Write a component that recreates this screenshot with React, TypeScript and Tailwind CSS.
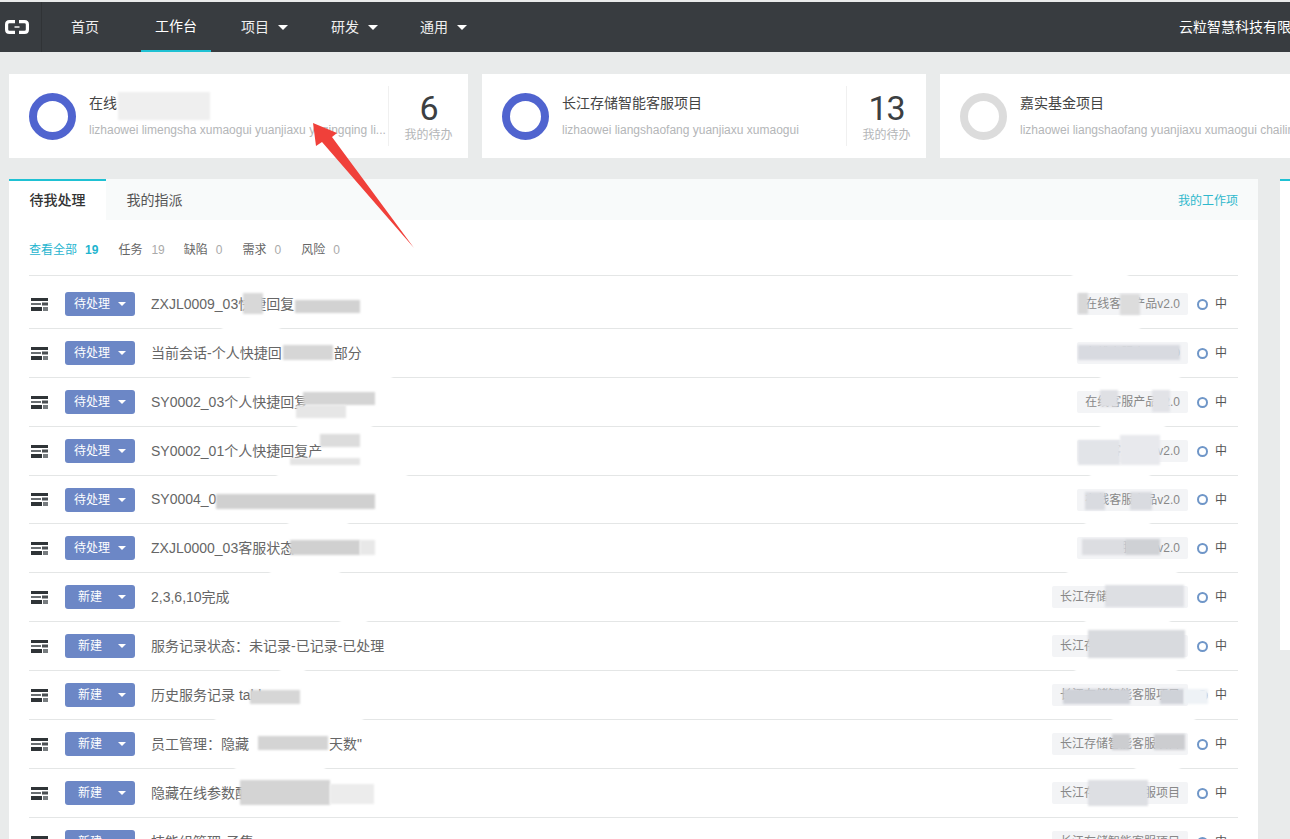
const font = "font-['Liberation_Sans','Noto_Sans_CJK_SC',sans-serif]";

const rows = [
  { status: "待处理", title: "ZXJL0009_03快捷回复", tag: "在线客服产品v2.0" },
  { status: "待处理", title: "当前会话-个人快捷回", tail: "部分", tailClass: "ml-[52px]", tag: "在线客服产品v2.0" },
  { status: "待处理", title: "SY0002_03个人快捷回复", tag: "在线客服产品v2.0" },
  { status: "待处理", title: "SY0002_01个人快捷回复产", tag: "在线客服产品v2.0" },
  { status: "待处理", title: "SY0004_0", tag: "在线客服产品v2.0" },
  { status: "待处理", title: "ZXJL0000_03客服状态", tag: "在线客服产品v2.0" },
  { status: "新建", title: "2,3,6,10完成", tag: "长江存储智能客服项目" },
  { status: "新建", title: "服务记录状态：未记录-已记录-已处理", tag: "长江存储智能客服项目" },
  { status: "新建", title: "历史服务记录 table", tag: "长江存储智能客服项目" },
  { status: "新建", title: "员工管理：隐藏", tail: "天数\"", tailClass: "ml-[80px]", tag: "长江存储智能客服项目" },
  { status: "新建", title: "隐藏在线参数配置", tag: "长江存储智能客服项目" },
  { status: "新建", title: "技能组管理-子集", tag: "长江存储智能客服项目" },
];

const cards = [
  { title: "在线", people: "lizhaowei limengsha xumaogui yuanjiaxu yuqingqing li...", count: "6", ring: "border-[#5064cf]", width: "w-[459px]" },
  { title: "长江存储智能客服项目", people: "lizhaowei liangshaofang yuanjiaxu xumaogui", count: "13", ring: "border-[#5064cf]", width: "w-[444px]" },
  { title: "嘉实基金项目", people: "lizhaowei liangshaofang yuanjiaxu xumaogui chailing", count: "", ring: "border-[#dcdcdc]", width: "w-[400px]" },
];

// mosaic patches that hide private text in the screenshot
const smudges = [
  // white patches over the row dividers
  "left-[222px] top-[324px] h-2 w-[58px] bg-white",
  "left-[250px] top-[373px] h-2 w-[142px] bg-white",
  "left-[297px] top-[422px] h-2 w-[75px] bg-white",
  "left-[277px] top-[471px] h-2 w-[130px] bg-white",
  "left-[288px] top-[520px] h-2 w-[60px] bg-white",
  "left-[270px] top-[569px] h-2 w-[70px] bg-white",
  "left-[340px] top-[618px] h-2 w-[27px] bg-white",
  "left-[280px] top-[667px] h-2 w-[25px] bg-white",
  "left-[215px] top-[715px] h-2 w-[148px] bg-white",
  "left-[235px] top-[764px] h-2 w-[90px] bg-white",
  "left-[1072px] top-[271px] h-2 w-[56px] bg-white",
  "left-[1072px] top-[324px] h-2 w-[68px] bg-white",
  "left-[1100px] top-[373px] h-2 w-[80px] bg-white",
  "left-[1100px] top-[422px] h-2 w-[65px] bg-white",
  "left-[1090px] top-[471px] h-2 w-[60px] bg-white",
  "left-[1085px] top-[520px] h-2 w-[65px] bg-white",
  "left-[1067px] top-[569px] h-2 w-[110px] bg-white",
  "left-[1085px] top-[618px] h-2 w-[85px] bg-white",
  "left-[1075px] top-[667px] h-2 w-[102px] bg-white",
  "left-[1112px] top-[715px] h-2 w-[83px] bg-white",
  "left-[1135px] top-[764px] h-2 w-[45px] bg-white",
  // card title
  "left-[118px] top-[92px] h-[28px] w-[92px] bg-[#efefef]",
  // titles
  "left-[243px] top-[293px] h-[21px] w-[20px] bg-[#d8d8d8]",
  "left-[295px] top-[300px] h-[13px] w-[65px] bg-[#d2d2d2]",
  "left-[283px] top-[345px] h-[15px] w-[50px] bg-[#d6d6d6]",
  "left-[303px] top-[392px] h-[13px] w-[72px] bg-[#d4d4d4]",
  "left-[296px] top-[405px] h-[13px] w-[50px] bg-[#e6e6e6]",
  "left-[320px] top-[434px] h-[13px] w-[40px] bg-[#dcdcdc]",
  "left-[290px] top-[458px] h-[7px] w-[70px] bg-[#e4e4e4]",
  "left-[216px] top-[494px] h-[15px] w-[159px] bg-[#d0d0d0]",
  "left-[290px] top-[540px] h-[15px] w-[70px] bg-[#d0d0d0]",
  "left-[360px] top-[540px] h-[15px] w-[15px] bg-[#e8e8e8]",
  "left-[250px] top-[690px] h-[14px] w-[50px] bg-[#d6d6d6]",
  "left-[258px] top-[736px] h-[14px] w-[70px] bg-[#d4d4d4]",
  "left-[240px] top-[780px] h-[25px] w-[90px] bg-[#d4d4d4]",
  "left-[330px] top-[784px] h-[20px] w-[44px] bg-[#ececec]",
  // tags
  "left-[1078px] top-[293px] h-[21px] w-[10px] bg-[#d8d8d8]",
  "left-[1120px] top-[294px] h-[21px] w-[20px] bg-[#dcdcdc]",
  "left-[1078px] top-[345px] h-[15px] w-[102px] bg-[#d8dae0]",
  "left-[1100px] top-[390px] h-[17px] w-[18px] bg-[#dfe0e4]",
  "left-[1152px] top-[390px] h-[22px] w-[18px] bg-[#e2e3e7]",
  "left-[1078px] top-[440px] h-[25px] w-[42px] bg-[#e2e4e8]",
  "left-[1120px] top-[435px] h-[30px] w-[40px] bg-[#e8e9ed]",
  "left-[1085px] top-[492px] h-[18px] w-[20px] bg-[#d9dbe0]",
  "left-[1130px] top-[492px] h-[18px] w-[22px] bg-[#d9dbe0]",
  "left-[1082px] top-[539px] h-4 w-[43px] bg-[#dcdde1]",
  "left-[1125px] top-[539px] h-4 w-[35px] bg-[#cfd1d5]",
  "left-[1105px] top-[585px] h-[22px] w-[79px] bg-[#dddfe3]",
  "left-[1088px] top-[630px] h-7 w-[97px] bg-[#d8dade]",
  "left-[1063px] top-[689px] h-[15px] w-[67px] bg-[#cfd2d8]",
  "left-[1160px] top-[689px] h-[15px] w-[24px] bg-[#cfd2d8]",
  "left-[1184px] top-[689px] h-[15px] w-[24px] bg-[#eef2f6]",
  "left-[1112px] top-[734px] h-4 w-[18px] bg-[#cccdd0]",
  "left-[1154px] top-[734px] h-4 w-[31px] bg-[#cccdd0]",
  "left-[1088px] top-[780px] h-[26px] w-[60px] bg-[#dddfe3]",
];

function Caret({ className }: { className: string }) {
  return <span className={`inline-block h-0 w-0 border-x-[4px] border-t-[4px] border-x-transparent ${className}`} />;
}

function ServerIcon() {
  return (
    <svg width="17" height="13" viewBox="0 0 17 13" className="shrink-0">
      <rect x="0" y="0" width="17" height="3" fill="#2f3437" />
      <rect x="0" y="5" width="10" height="2" fill="#6a6f72" />
      <rect x="11" y="4.5" width="6" height="3" fill="#4a4f52" />
      <rect x="0" y="9" width="11" height="4" fill="#2f3437" />
      <rect x="12" y="9" width="5" height="4" fill="#777c7f" />
    </svg>
  );
}

function Logo() {
  return (
    <svg width="24" height="14" viewBox="0 0 24 14" fill="none" stroke="#fff" strokeWidth="3.2">
      <path d="M10 1.6H4.5Q1.6 1.6 1.6 4.5V9.5Q1.6 12.4 4.5 12.4H10" />
      <path d="M14 1.6H19.5Q22.4 1.6 22.4 4.5V9.5Q22.4 12.4 19.5 12.4H14" />
      <path d="M9.5 7H14.5" strokeWidth="1.4" />
    </svg>
  );
}

function NavItem({ label, menu, className }: { label: string; menu?: boolean; className: string }) {
  return (
    <div className={`flex h-full items-center gap-[9px] text-[14px] text-[#f0f0f0] ${className}`}>
      {label}
      {menu && <Caret className="border-x-[5px] border-t-[5px] border-t-white" />}
    </div>
  );
}

function ProjectCard({ card }: { card: (typeof cards)[number] }) {
  return (
    <div className={`flex h-[84px] shrink-0 items-center bg-white pl-5 ${card.width}`}>
      <div className={`h-[47px] w-[47px] shrink-0 rounded-full border-[8px] ${card.ring}`} />
      <div className="ml-[13px] min-w-0 flex-1">
        <div className="-mt-px text-[14px] leading-5 text-[#444]">{card.title}</div>
        <div className="mt-[9px] whitespace-nowrap text-[12px] leading-4 text-[#b4b6b8]">{card.people}</div>
      </div>
      {card.count && (
        <div className="flex h-[60px] w-[80px] shrink-0 flex-col items-center justify-center border-l border-[#f0f0f0]">
          <div className="mt-[2px] font-['Roboto'] text-[34px] leading-[34px] tracking-[-1px] text-[#3c3f42]">{card.count}</div>
          <div className="mt-[2px] text-[12px] leading-4 text-[#b4b6b8]">我的待办</div>
        </div>
      )}
    </div>
  );
}

function Row({ row, height }: { row: (typeof rows)[number]; height: string }) {
  return (
    <div className={`flex shrink-0 items-center border-t border-[#e4e6e6] pl-[2px] ${height}`}>
      <ServerIcon />
      <div className="ml-[17px] flex h-6 w-[70px] shrink-0 items-center justify-center gap-2 rounded-[3px] bg-[#6c87c6] text-[12px] text-white">
        <span className={row.status === "新建" ? "ml-1 mr-2" : ""}>{row.status}</span>
        <Caret className="border-t-white" />
      </div>
      <div className="ml-4 flex-1 truncate text-[14px] text-[#666]">
        {row.title}
        {row.tail && <span className={row.tailClass}>{row.tail}</span>}
      </div>
      <div className="flex h-[22px] items-center rounded-[2px] bg-[#f3f4f6] px-2 text-[12px] text-[#888]">{row.tag}</div>
      <span className="ml-[9px] h-[11px] w-[11px] rounded-full border-2 border-[#6f96c8]" />
      <span className="ml-[7px] mr-[11px] text-[12px] text-[#555]">中</span>
    </div>
  );
}

export default function App() {
  return (
    <div className={`relative h-[839px] w-[1290px] overflow-hidden bg-[#e9ebeb] pt-[2px] ${font}`}>
      {/* nav */}
      <div className="flex h-[50px] items-center bg-[#383c40]">
        <div className="flex h-full w-[42px] shrink-0 items-center border-r border-[#303336] pl-[5px]">
          <Logo />
        </div>
        <NavItem label="首页" className="ml-[29px] w-[30px]" />
        <div className="ml-[40px] flex h-full w-[70px] items-center justify-center border-b-2 border-[#1fc1d3] text-[14px] text-white">工作台</div>
        <NavItem label="项目" menu className="ml-[30px] w-[48px]" />
        <NavItem label="研发" menu className="ml-[42px] w-[48px]" />
        <NavItem label="通用" menu className="ml-[41px] w-[48px]" />
        <div className="ml-auto w-[111px] overflow-hidden whitespace-nowrap text-[14px] text-white">云粒智慧科技有限公司</div>
      </div>

      {/* project cards */}
      <div className="mt-[22px] flex gap-[14px] pl-[9px]">
        {cards.map((c) => (
          <ProjectCard key={c.title} card={c} />
        ))}
      </div>

      <div className="mt-[21px] flex gap-[22px] pl-[9px]">
        {/* main panel */}
        <div className="w-[1249px] shrink-0 bg-white">
          <div className="flex h-[41px] items-end bg-[#f8fafa] pr-5">
            <div className="flex h-[41px] w-[97px] items-center justify-center border-t-2 border-[#1fc1d3] bg-white text-[14px] font-medium text-[#333]">待我处理</div>
            <div className="flex h-[39px] w-[97px] items-center justify-center text-[14px] text-[#555]">我的指派</div>
            <div className="ml-auto flex h-[39px] items-center text-[12px] text-[#2fb8cc]">我的工作项</div>
          </div>
          <div className="px-5">
            <div className="flex h-[55px] items-center pt-[5px] text-[12px] text-[#666]">
              <span className="text-[#1fb5cf]">查看全部</span>
              <span className="ml-2 font-bold text-[#1fb5cf]">19</span>
              <span className="ml-5">任务</span>
              <span className="ml-[9px] text-[#aaa]">19</span>
              <span className="ml-[19px]">缺陷</span>
              <span className="ml-2 text-[#aaa]">0</span>
              <span className="ml-5">需求</span>
              <span className="ml-2 text-[#aaa]">0</span>
              <span className="ml-5">风险</span>
              <span className="ml-2 text-[#aaa]">0</span>
            </div>
            {rows.map((r, i) => (
              <Row key={r.title} row={r} height={i === 0 ? "h-[53px] pt-[4px]" : i === 4 ? "h-[48px]" : "h-[49px]"} />
            ))}
          </div>
        </div>
        {/* side panel */}
        <div className="h-[471px] flex-1 border-t-2 border-[#1fc1d3] bg-white" />
      </div>

      {smudges.map((s) => (
        <div key={s} className={`absolute blur-[1px] ${s}`} />
      ))}

      {/* red arrow annotation */}
      <svg className="absolute left-[305px] top-[118px]" width="115" height="135" viewBox="0 0 115 135">
        <path d="M8 5 L32 15 L27 19 L109 130 L17 24 L11 28 Z" fill="#f0403a" />
      </svg>
    </div>
  );
}
